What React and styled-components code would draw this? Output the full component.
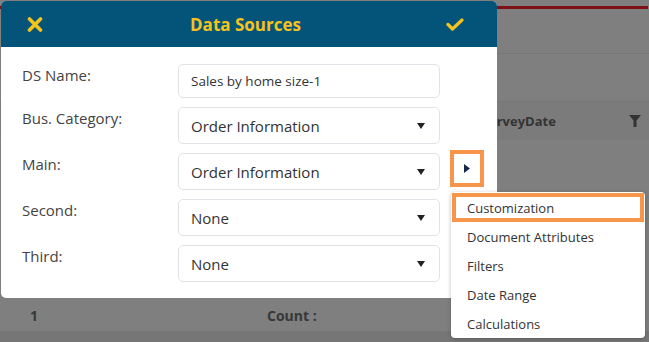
import styled, { createGlobalStyle } from "styled-components";

const GlobalStyle = createGlobalStyle`
  html, body {
    margin: 0;
    padding: 0;
    background: #7f7f7f;
  }
  body {
    font-family: "Open Sans", "Liberation Sans", sans-serif;
  }
`;

const Page = styled.div`
  position: relative;
  width: 649px;
  height: 342px;
  overflow: hidden;
  background: #7f7f7f;
`;

/* dimmed app behind the dialog */
const Backdrop = styled.div`
  display: flex;
  flex-direction: column;
  height: 100%;
`;

const RedRule = styled.div`
  height: 3px;
  margin-top: 6px;
  margin-right: 1px;
  background: #7e1115;
`;

const Band = styled.div`
  height: ${(p) => p.h}px;
  border-bottom: 1px solid #767676;
`;

const GridHeader = styled.div`
  height: 38px;
  display: flex;
  align-items: center;
  justify-content: space-between;
  padding: 0 8px 0 481px;
  background: #7b7b7b;
  color: #333;
  font-size: 13px;
  font-weight: 700;
`;

const GridBody = styled.div`
  flex: 1;
`;

const SummaryRow = styled.div`
  height: 31px;
  display: grid;
  grid-template-columns: 237px 1fr;
  align-items: center;
  padding-left: 30px;
  color: #383838;
  font-size: 14px;
  font-weight: 700;
`;

const FooterBand = styled.div`
  height: 11px;
  background: #767676;
`;

/* dialog */
const Dialog = styled.div`
  position: absolute;
  top: 1px;
  left: 1px;
  width: 496px;
  background: #fff;
  border-radius: 5px;
  overflow: hidden;
`;

const Header = styled.div`
  height: 46px;
  display: grid;
  grid-template-columns: 1fr auto 1fr;
  align-items: center;
  padding: 0 33px 0 26px;
  background: #04547a;
  color: #f6c21c;
`;

const Title = styled.div`
  font-size: 17px;
  font-weight: 700;
`;

const HeaderIcon = styled.svg`
  justify-self: ${(p) => p.side};
  display: block;
`;

const Form = styled.div`
  display: flex;
  flex-direction: column;
  gap: 9px;
  padding: 17px 0 16px 21px;
`;

const Row = styled.div`
  display: flex;
  align-items: flex-start;
`;

const Label = styled.div`
  width: 156px;
  line-height: 22px;
  font-size: 15px;
  color: #444;
`;

const Field = styled.div`
  box-sizing: border-box;
  width: 262px;
  height: ${(p) => (p.select ? 37 : 34)}px;
  display: flex;
  align-items: center;
  justify-content: space-between;
  padding: 0 14px 0 12px;
  border: 1px solid #e1e2e8;
  border-radius: 5px;
  font-size: ${(p) => (p.select ? 15 : 13.5)}px;
  color: #333;
`;

const ArrowBox = styled.div`
  box-sizing: border-box;
  width: 34px;
  height: 37px;
  margin: -3px 0 0 10px;
  display: flex;
  align-items: center;
  justify-content: center;
  border: 4px solid #f7964a;
`;

/* context menu */
const Menu = styled.div`
  position: absolute;
  top: 192px;
  left: 451px;
  width: 194px;
  box-sizing: border-box;
  padding: 1px 1px 0;
  background: #fff;
  border-radius: 4px;
  box-shadow: 0 1px 4px rgba(0, 0, 0, 0.25);
`;

const MenuItem = styled.div`
  box-sizing: border-box;
  height: 29px;
  display: flex;
  align-items: center;
  padding-left: 11px;
  border: 4px solid ${(p) => (p.active ? "#f7964a" : "transparent")};
  font-size: 13px;
  color: #333;
`;

const Caret = () => (
  <svg width="8" height="6" viewBox="0 0 8 6">
    <polygon points="0,0 8,0 4,6" fill="#222" />
  </svg>
);

const rows = [
  { label: "DS Name:", value: "Sales by home size-1" },
  { label: "Bus. Category:", value: "Order Information", select: true },
  { label: "Main:", value: "Order Information", select: true, more: true },
  { label: "Second:", value: "None", select: true },
  { label: "Third:", value: "None", select: true },
];

const menuItems = ["Customization", "Document Attributes", "Filters", "Date Range", "Calculations"];

export default function App() {
  return (
    <Page>
      <GlobalStyle />
      <Backdrop>
        <RedRule />
        <Band h={44} />
        <Band h={47} />
        <GridHeader>
          <span>SurveyDate</span>
          <svg width="12" height="12" viewBox="0 0 12 12">
            <polygon points="0,0 12,0 7.5,5.5 7.5,12 4.5,12 4.5,5.5" fill="#333" />
          </svg>
        </GridHeader>
        <GridBody />
        <SummaryRow>
          <span>1</span>
          <span>Count :</span>
        </SummaryRow>
        <FooterBand />
      </Backdrop>

      <Dialog>
        <Header>
          <HeaderIcon side="start" width="16" height="15" viewBox="0 0 16 15">
            <path d="M2.5 2 L13.5 13 M13.5 2 L2.5 13" stroke="#f6c21c" strokeWidth="3.6" strokeLinecap="round" />
          </HeaderIcon>
          <Title>Data Sources</Title>
          <HeaderIcon side="end" width="18" height="13" viewBox="0 0 18 13">
            <path d="M2 6.5 L6.5 11 L16 2" fill="none" stroke="#f6c21c" strokeWidth="3.2" strokeLinecap="round" strokeLinejoin="round" />
          </HeaderIcon>
        </Header>
        <Form>
          {rows.map((r) => (
            <Row key={r.label}>
              <Label>{r.label}</Label>
              <Field select={r.select}>
                <span>{r.value}</span>
                {r.select && <Caret />}
              </Field>
              {r.more && (
                <ArrowBox>
                  <svg width="6" height="9" viewBox="0 0 6 9">
                    <polygon points="0,0 6,4.5 0,9" fill="#16294a" />
                  </svg>
                </ArrowBox>
              )}
            </Row>
          ))}
        </Form>
      </Dialog>

      <Menu>
        {menuItems.map((m, i) => (
          <MenuItem key={m} active={i === 0}>
            {m}
          </MenuItem>
        ))}
      </Menu>
    </Page>
  );
}
